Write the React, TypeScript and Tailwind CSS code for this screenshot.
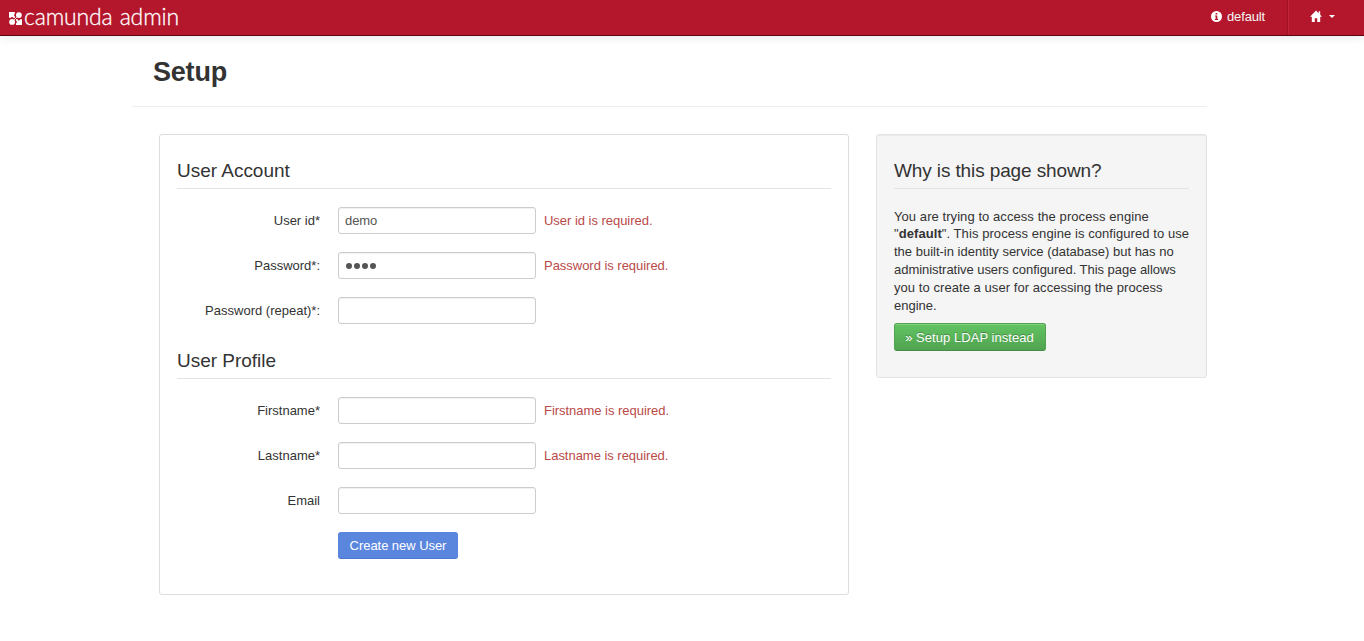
import type { ReactNode } from "react";

function Logo() {
  return (
    <svg className="mt-[2px] h-[13px] w-[13px]" viewBox="0 0 13 13" fill="#fff">
      <path d="M0 0h5.800v1.900a1.300 1.300 0 0 0 0 2.400v1.500H4.200a1.200 1.200 0 0 0-2.300 0H0z" />
      <circle cx="9.900" cy="3.100" r="2.900" />
      <circle cx="3.100" cy="9.900" r="2.900" />
      <path d="M13 13H7v-1.700a1.300 1.300 0 0 0 0-2.500V7.200h1.600a1.200 1.200 0 0 0 2.400 0h2z" />
      <path d="M4.800 4.800l3.400 3.400M8.300 4.700L4.700 8.300" stroke="#fff" strokeWidth=".8" />
    </svg>
  );
}

function InfoIcon() {
  return (
    <svg className="h-[11px] w-[11px]" viewBox="0 0 11 11">
      <circle cx="5.5" cy="5.5" r="5.5" fill="#fff" />
      <path d="M4.600 1.900h1.700v1.500H4.600zM3.900 4.500h2.400v3.300h.8v1.100H3.900V7.800h.8V5.600h-.8z" fill="#b4162b" />
    </svg>
  );
}

function HomeIcon() {
  return (
    <svg className="h-[12px] w-[12px]" viewBox="0 0 12 12" fill="#fff">
      <path d="M6 .5L0 6.700h1.800V12h3V8.300h2.400V12h3V6.700H12L10.200 4.700V1.300H8.700v1.900z" />
    </svg>
  );
}

function Header() {
  return (
    <header className="flex h-9 items-start justify-between border-b border-[#5c0510] bg-[#b4162b] shadow-[0_1px_10px_rgba(0,0,0,0.1)]">
      <div className="flex h-[35px] items-center pl-[9px] text-white">
        <Logo />
        <span className="-mt-[3px] ml-[2px] font-[Lato] text-[23px] leading-[32px] font-light tracking-[-0.15px] [word-spacing:1px] whitespace-nowrap [-webkit-text-stroke:0.3px_#fff]">
          camunda admin
        </span>
      </div>
      <nav className="flex h-[35px]">
        <div className="flex h-[33px] items-center gap-[5px] pr-[22px] text-[#f5f5f5]">
          <InfoIcon />
          <span className="leading-[33px] tracking-[-0.15px]">default</span>
        </div>
        <div className="flex h-[35px] w-[77px] items-center border-l border-[#a01325] pb-[3px] pl-[22px] shadow-[inset_1px_0_0_#c22439]">
          <HomeIcon />
          <span className="ml-[7px] border-x-[3px] border-t-[3px] border-x-transparent border-t-white" />
        </div>
      </nav>
    </header>
  );
}

function Legend({ children }: { children: ReactNode }) {
  return (
    <h3 className="h-[36px] border-b border-[#e3e3e3] text-[19px] leading-[35px] tracking-[-0.02px]">
      {children}
    </h3>
  );
}

type FieldProps = { label: string; value?: string; password?: boolean; error?: string };

function Field({ label, value = "", password = false, error }: FieldProps) {
  return (
    <div className="flex h-[27px] items-center">
      <label className="w-[143px] text-right">{label}</label>
      <div className="ml-[18px] flex h-[27px] w-[198px] items-center rounded-[3px] border border-[#ccc] bg-white px-[6px] text-[#555] shadow-[inset_0_1px_1px_rgba(0,0,0,0.06)]">
        {password ? (
          <div className="mt-px flex gap-[2px] pl-px">
            {Array.from(value).map((_, i) => (
              <span key={i} className="h-[6px] w-[6px] rounded-full bg-[#555]" />
            ))}
          </div>
        ) : (
          <input
            type="text"
            readOnly
            value={value}
            className="h-[25px] w-full bg-transparent tracking-[-0.1px] outline-none"
          />
        )}
      </div>
      {error && <span className="ml-2 tracking-[-0.03px] text-[#b94a48]">{error}</span>}
    </div>
  );
}

export default function App() {
  return (
    <div className="min-h-[641px] bg-white font-['Liberation_Sans',Arial,sans-serif] text-[13px] leading-[18px] text-[#333]">
      <Header />
      <main className="ml-[132px] w-[1075px]">
        <div className="h-[71px] border-b border-[#eee] pl-[21px]">
          <h1 className="text-[27px] leading-[72px] font-bold tracking-[-0.2px]">Setup</h1>
        </div>
        <div className="mt-[27px] ml-[27px] flex items-start gap-[27px]">
          <form className="h-[461px] w-[690px] rounded-[3px] border border-[#ddd] px-[17px] pt-[18px]">
            <Legend>User Account</Legend>
            <div className="mt-[18px] flex flex-col gap-[18px]">
              <Field label="User id*" value="demo" error="User id is required." />
              <Field label="Password*:" value="demo" password error="Password is required." />
              <Field label="Password (repeat)*:" />
            </div>
            <div className="mt-[19px]">
              <Legend>User Profile</Legend>
            </div>
            <div className="mt-[18px] flex flex-col gap-[18px]">
              <Field label="Firstname*" error="Firstname is required." />
              <Field label="Lastname*" error="Lastname is required." />
              <Field label="Email" />
            </div>
            <button
              type="button"
              className="mt-[18px] ml-[161px] h-[27px] w-[120px] rounded-[3px] border border-[#5784dc] border-b-[#4c78cf] bg-[#5a86de] tracking-[-0.05px] text-white"
            >
              Create new User
            </button>
          </form>
          <aside className="h-[244px] w-[331px] rounded-[3px] border border-[#e3e3e3] bg-[#f5f5f5] px-[17px] pt-[18px] shadow-[inset_0_1px_1px_rgba(0,0,0,0.05)]">
            <Legend>
              <span className="tracking-[-0.12px]">Why is this page shown?</span>
            </Legend>
            <p className="mt-[18.600px] text-[13px] leading-[17.850px] whitespace-nowrap">
              <span className="tracking-[0.07px]">You are trying to access the process engine</span>
              <br />
              <span className="tracking-[0.07px]">
                "<b>default</b>". This process engine is configured to use
              </span>
              <br />
              the built-in identity service (database) but has no
              <br />
              <span className="tracking-[-0.04px]">administrative users configured. This page allows</span>
              <br />
              <span className="tracking-[0.06px]">you to create a user for accessing the process</span>
              <br />
              engine.
            </p>
            <button
              type="button"
              className="mt-[8.300px] h-[28px] w-[152px] rounded-[3px] border border-[#51a351] border-b-[#448c44] bg-linear-to-b from-[#62c462] to-[#51a351] pt-[2px] pr-px tracking-[0.05px] text-white shadow-[inset_0_1px_0_rgba(255,255,255,0.2)] [text-shadow:0_-1px_0_rgba(0,0,0,0.25)]"
            >
              » Setup LDAP instead
            </button>
          </aside>
        </div>
      </main>
    </div>
  );
}
